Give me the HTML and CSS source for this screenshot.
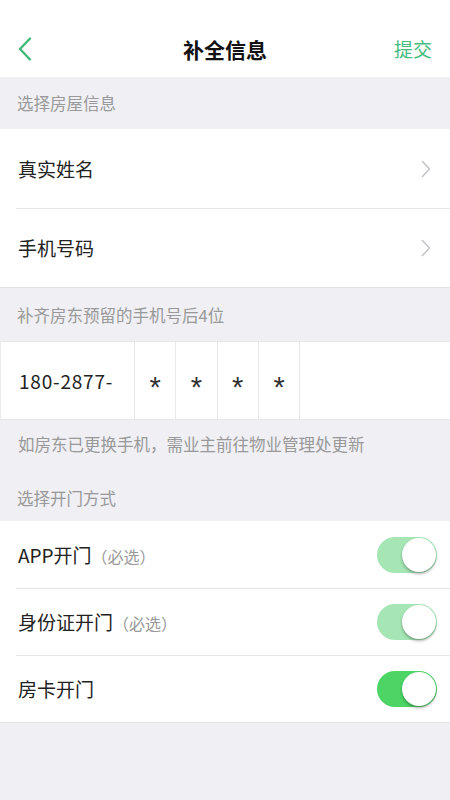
FILE: index.html
```html
<!DOCTYPE html>
<html lang="zh-CN">
<head>
    <meta charset="UTF-8">
    <meta name="viewport" content="width=device-width, initial-scale=1.0">
    <title>补全信息</title>
    <link rel="stylesheet" href="styles.css">
</head>
<body>
    <div class="page">
        <header class="navbar">
            <a class="nav-back" href="#">
                <svg width="14" height="24" viewBox="0 0 14 24"><path d="M12 1.5 L2 12 L12 22.5" fill="none" stroke="#3dba78" stroke-width="2.4" stroke-linecap="round" stroke-linejoin="round"/></svg>
            </a>
            <h1 class="nav-title">补全信息</h1>
            <a class="nav-action" href="#">提交</a>
        </header>

        <div class="section-title">选择房屋信息</div>
        <div class="group">
            <div class="cell">
                <span class="cell-label">真实姓名</span>
                <svg class="arrow" width="10" height="18" viewBox="0 0 10 18"><path d="M1.5 1.5 L8.5 9 L1.5 16.5" fill="none" stroke="#c4c4c8" stroke-width="1.6" stroke-linecap="round" stroke-linejoin="round"/></svg>
            </div>
            <div class="cell">
                <span class="cell-label">手机号码</span>
                <svg class="arrow" width="10" height="18" viewBox="0 0 10 18"><path d="M1.5 1.5 L8.5 9 L1.5 16.5" fill="none" stroke="#c4c4c8" stroke-width="1.6" stroke-linecap="round" stroke-linejoin="round"/></svg>
            </div>
        </div>

        <div class="section-title tall">补齐房东预留的手机号后4位</div>
        <div class="phone-row">
            <div class="phone-prefix">180-2877-</div>
            <div class="digit">*</div>
            <div class="digit">*</div>
            <div class="digit">*</div>
            <div class="digit">*</div>
            <div class="phone-rest"></div>
        </div>
        <div class="tip">如房东已更换手机，需业主前往物业管理处更新</div>

        <div class="section-title door">选择开门方式</div>
        <div class="group">
            <div class="cell switch-cell">
                <span class="cell-label">APP开门<span class="note">（必选）</span></span>
                <span class="switch disabled"><span class="knob"></span></span>
            </div>
            <div class="cell switch-cell">
                <span class="cell-label">身份证开门<span class="note">（必选）</span></span>
                <span class="switch disabled"><span class="knob"></span></span>
            </div>
            <div class="cell switch-cell">
                <span class="cell-label">房卡开门</span>
                <span class="switch"><span class="knob"></span></span>
            </div>
        </div>
    </div>
</body>
</html>
```

FILE: styles.css
```css
body {
    margin: 0;
    background-color: #efeff4;
    font-family: "Noto Sans CJK SC", "Noto Sans", sans-serif;
    color: #222;
}

.page {
    width: 450px;
    min-height: 800px;
}

.navbar {
    height: 77px;
    background-color: #fff;
    display: flex;
    align-items: center;
    justify-content: space-between;
    padding: 20px 18px 0 18px;
    box-sizing: border-box;
}

.nav-back {
    width: 60px;
    display: flex;
    align-items: center;
}

.nav-title {
    margin: 0;
    font-size: 21px;
    font-weight: bold;
    color: #111;
}

.nav-action {
    width: 60px;
    text-align: right;
    font-size: 19px;
    color: #45bd7f;
    text-decoration: none;
}

.section-title {
    height: 52px;
    padding: 0 17px;
    display: flex;
    align-items: center;
    font-size: 16.5px;
    color: #999;
}

.section-title.tall {
    height: 53px;
}

.section-title.door {
    height: 53px;
    padding-top: 6px;
    box-sizing: border-box;
}

.group {
    background-color: #fff;
    border-bottom: 1px solid #e3e3e6;
}

.cell {
    height: 79px;
    display: flex;
    align-items: center;
    justify-content: space-between;
    padding: 0 18px;
    position: relative;
}

.cell + .cell::before {
    content: "";
    position: absolute;
    top: 0;
    left: 16px;
    right: 0;
    border-top: 1px solid #e6e6e9;
}

.cell-label {
    font-size: 19px;
    color: #222;
}

.arrow {
    margin-right: 1px;
}

.phone-row {
    height: 79px;
    display: flex;
    background-color: #fff;
    border-top: 1px solid #e6e6e9;
    border-bottom: 1px solid #e6e6e9;
    box-sizing: border-box;
}

.phone-prefix {
    width: 134px;
    padding-left: 18px;
    box-sizing: border-box;
    display: flex;
    align-items: center;
    font-size: 19px;
    letter-spacing: 0.8px;
    color: #222;
    border-left: 1px solid #ececef;
}

.digit {
    width: 41.3px;
    border-left: 1px solid #e8e8eb;
    display: flex;
    align-items: center;
    justify-content: center;
    font-size: 29px;
    font-family: "Liberation Sans", sans-serif;
    padding-top: 14px;
    box-sizing: border-box;
    color: #333;
}

.phone-rest {
    flex: 1;
    border-left: 1px solid #e8e8eb;
}

.tip {
    height: 48px;
    padding: 0 18px;
    display: flex;
    align-items: center;
    font-size: 16.5px;
    color: #999;
}

.switch-cell {
    height: 67px;
    padding-right: 13px;
}

.note {
    font-size: 16px;
    color: #999;
}

.switch {
    width: 60px;
    height: 36px;
    border-radius: 18px;
    background-color: #4cd465;
    position: relative;
}

.switch.disabled {
    background-color: #a5e6b4;
}

.knob {
    position: absolute;
    top: 1px;
    right: 1px;
    width: 34px;
    height: 34px;
    border-radius: 50%;
    background-color: #fff;
    box-shadow: 0 2px 3px rgba(0, 0, 0, 0.3);
}
```
